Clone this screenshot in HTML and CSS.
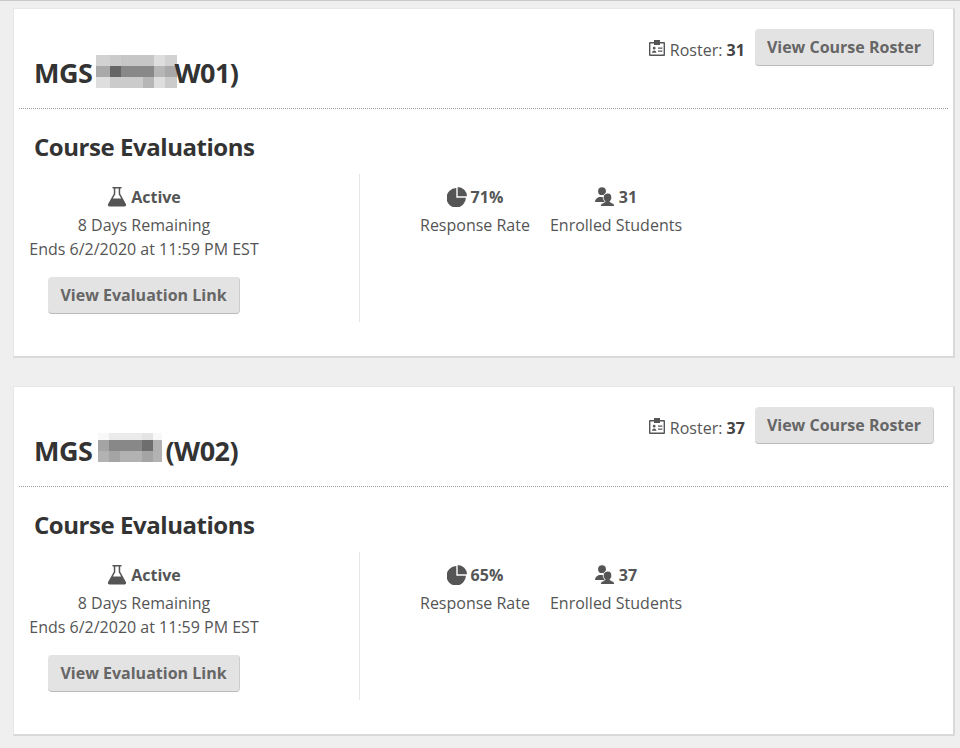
FILE: index.html
```html
<!DOCTYPE html>
<html lang="en">

<head>
    <meta charset="UTF-8">
    <meta name="viewport" content="width=device-width, initial-scale=1.0">
    <title>Course Evaluations</title>
    <link rel="stylesheet" href="styles.css">
</head>

<body>
    <section class="card">
        <header class="card-head">
            <h1 class="course-title">MGS<span class="mosaic mosaic-a">
                <i class="c1"></i><i class="c2"></i><i class="c3"></i><i class="c3"></i><i class="c3"></i><i class="c4"></i><i class="c1"></i>
                <i class="c5"></i><i class="c6"></i><i class="c7"></i><i class="c7"></i><i class="c7"></i><i class="c8"></i><i class="c5"></i>
                <i class="c4"></i><i class="c2"></i><i class="c2"></i><i class="c2"></i><i class="c8"></i><i class="c4"></i><i class="c2"></i>
            </span>W01)</h1>
            <div class="roster">
                <svg class="icon-badge" viewBox="0 0 16 16"><path d="M5 0h6v2h4a1 1 0 0 1 1 1v12a1 1 0 0 1-1 1H1a1 1 0 0 1-1-1V3a1 1 0 0 1 1-1h4zM1.400 3.400v11.200h13.200V3.400H11V5H5V3.400zM5.200 6.800a1.400 1.400 0 1 1 0 2.800 1.400 1.400 0 0 1 0-2.800zM3 12.800c0-1.400.8-2.400 2.200-2.400s2.200 1 2.200 2.400zM9 7.400h4.400v1.300H9zM9 10.400h4.400v1.300H9z" fill-rule="evenodd"/></svg>
                <span class="roster-label">Roster: <b>31</b></span>
                <button class="btn" type="button">View Course Roster</button>
            </div>
        </header>
        <h2 class="section-title">Course Evaluations</h2>
        <div class="eval-row">
            <div class="eval-status">
                <div class="stat-head">
                    <svg class="icon-flask" viewBox="0 0 20 20"><path d="M5.500 0h9v1.500h-1.300v5.300l5.700 10.100c.6 1.100-.1 2.600-1.500 2.600H2.600c-1.400 0-2.100-1.500-1.500-2.600l5.700-10.100V1.500H5.500zM8.300 1.500v5.700l-2.500 4.400h8.400l-2.500-4.400V1.500z" fill-rule="evenodd"/></svg>
                    Active
                </div>
                <div>8 Days Remaining</div>
                <div>Ends 6/2/2020 at 11:59 PM EST</div>
                <button class="btn btn-eval" type="button">View Evaluation Link</button>
            </div>
            <div class="eval-stats">
                <div class="stat">
                    <div class="stat-head">
                        <svg class="icon-pie" viewBox="0 0 20 20"><path d="M9.300 1.100v9.600h9.600A9.700 9.700 0 1 1 9.300 1.100zM10.700 0a9.300 9.300 0 0 1 9.300 9.300h-9.300z"/></svg>
                        71%
                    </div>
                    <div>Response Rate</div>
                </div>
                <div class="stat">
                    <div class="stat-head">
                        <svg class="icon-users" viewBox="0 0 20 20"><circle cx="7" cy="4.200" r="3.900"/><path d="M0 15c0-3 2.200-4.200 4-5l6 0c1 .8 1 2 0 5z"/><path class="front" d="M12.800 6c2.500 0 4 1.900 4 4.300 0 1.600-.7 3-1.700 3.900 0 .9.700 1.200 1.800 1.600 1.700.6 2.800 1.400 2.800 3.700H5.300c0-2.300 1.100-3.100 2.800-3.700 1.100-.4 1.800-.7 1.800-1.600-1-.9-1.700-2.300-1.700-3.900C8.200 7.900 10.300 6 12.800 6z"/></svg>
                        31
                    </div>
                    <div>Enrolled Students</div>
                </div>
            </div>
        </div>
    </section>

    <section class="card">
        <header class="card-head">
            <h1 class="course-title">MGS<span class="mosaic mosaic-b">
                <i class="c9"></i><i class="c10"></i><i class="c10"></i><i class="c10"></i><i class="c11"></i><i class="c9"></i>
                <i class="c12"></i><i class="c7"></i><i class="c7"></i><i class="c7"></i><i class="c13"></i><i class="c14"></i>
                <i class="c14"></i><i class="c12"></i><i class="c14"></i><i class="c14"></i><i class="c12"></i><i class="c14"></i>
            </span>(W02)</h1>
            <div class="roster">
                <svg class="icon-badge" viewBox="0 0 16 16"><path d="M5 0h6v2h4a1 1 0 0 1 1 1v12a1 1 0 0 1-1 1H1a1 1 0 0 1-1-1V3a1 1 0 0 1 1-1h4zM1.400 3.400v11.200h13.200V3.400H11V5H5V3.400zM5.200 6.800a1.400 1.400 0 1 1 0 2.800 1.400 1.400 0 0 1 0-2.800zM3 12.800c0-1.400.8-2.400 2.200-2.400s2.200 1 2.200 2.400zM9 7.400h4.400v1.300H9zM9 10.400h4.400v1.300H9z" fill-rule="evenodd"/></svg>
                <span class="roster-label">Roster: <b>37</b></span>
                <button class="btn" type="button">View Course Roster</button>
            </div>
        </header>
        <h2 class="section-title">Course Evaluations</h2>
        <div class="eval-row">
            <div class="eval-status">
                <div class="stat-head">
                    <svg class="icon-flask" viewBox="0 0 20 20"><path d="M5.500 0h9v1.500h-1.300v5.300l5.700 10.100c.6 1.100-.1 2.600-1.500 2.600H2.600c-1.400 0-2.100-1.500-1.500-2.600l5.700-10.100V1.500H5.500zM8.300 1.500v5.700l-2.500 4.400h8.400l-2.500-4.400V1.500z" fill-rule="evenodd"/></svg>
                    Active
                </div>
                <div>8 Days Remaining</div>
                <div>Ends 6/2/2020 at 11:59 PM EST</div>
                <button class="btn btn-eval" type="button">View Evaluation Link</button>
            </div>
            <div class="eval-stats">
                <div class="stat">
                    <div class="stat-head">
                        <svg class="icon-pie" viewBox="0 0 20 20"><path d="M9.300 1.100v9.600h9.600A9.700 9.700 0 1 1 9.300 1.100zM10.700 0a9.300 9.300 0 0 1 9.300 9.300h-9.300z"/></svg>
                        65%
                    </div>
                    <div>Response Rate</div>
                </div>
                <div class="stat">
                    <div class="stat-head">
                        <svg class="icon-users" viewBox="0 0 20 20"><circle cx="7" cy="4.200" r="3.900"/><path d="M0 15c0-3 2.200-4.200 4-5l6 0c1 .8 1 2 0 5z"/><path class="front" d="M12.800 6c2.500 0 4 1.900 4 4.300 0 1.600-.7 3-1.700 3.900 0 .9.700 1.200 1.800 1.600 1.700.6 2.800 1.400 2.800 3.700H5.300c0-2.300 1.100-3.100 2.800-3.700 1.100-.4 1.800-.7 1.800-1.600-1-.9-1.700-2.300-1.700-3.900C8.200 7.900 10.300 6 12.800 6z"/></svg>
                        37
                    </div>
                    <div>Enrolled Students</div>
                </div>
            </div>
        </div>
    </section>
</body>

</html>
```

FILE: styles.css
```css
body {
    margin: 0;
    padding: 8px 5px 0 13px;
    background: #efefef;
    border-top: 1px solid #c9c9c9;
    font-family: "Open Sans", sans-serif;
    font-size: 16px;
    line-height: 24px;
    color: #555;
}

.card {
    box-sizing: border-box;
    height: 350px;
    margin-top: -1px;
    margin-bottom: 29px;
    padding: 0 5px;
    background: #fff;
    border: 1px solid #e6e6e6;
    border-right: 2px solid #d9d9d9;
    border-bottom: 2px solid #d9d9d9;
}

.card-head {
    display: flex;
    justify-content: space-between;
    align-items: flex-start;
    height: 99px;
    padding: 0 14px 0 15px;
    border-bottom: 1px dotted #999;
}

.course-title {
    display: flex;
    align-items: flex-start;
    margin: 46px 0 0;
    height: 35px;
    font-size: 27px;
    line-height: 35px;
    letter-spacing: -0.5px;
    color: #333;
}

.mosaic {
    display: grid;
    grid-template-rows: 11px 11px 11px;
}

.mosaic-a {
    grid-template-columns: 14px 11px 11px 11px 11px 11px 12px;
    margin: 0 -3px 0 4px;
}

.mosaic-b {
    grid-template-rows: 7px 11px 11px;
    grid-template-columns: 11px 11px 11px 11px 11px 9px;
    margin: 0 3px 0 6px;
}

.c1 { background: #d2d2d2; }
.c2 { background: #cbcbcb; }
.c3 { background: #c6c6c6; }
.c4 { background: #dedede; }
.c5 { background: #a9a9a9; }
.c6 { background: #666; }
.c7 { background: #888; }
.c8 { background: #b6b6b6; }
.c9 { background: #f8f8f8; }
.c10 { background: #ebebeb; }
.c11 { background: #e4e4e4; }
.c12 { background: #a4a4a4; }
.c13 { background: #6e6e6e; }
.c14 { background: #b2b2b2; }

.roster {
    display: flex;
    align-items: center;
    margin-top: 20px;
}

.roster-label {
    margin: 5px 10px 0 5px;
}

.roster-label b {
    color: #444;
}

.icon-badge {
    width: 16px;
    height: 16px;
    margin-top: 1px;
    fill: #555;
}

.btn {
    padding: 0 12px;
    height: 37px;
    background: #e3e3e3;
    border: 0;
    border-bottom: 1px solid #bbb;
    border-right: 1px solid #ccc;
    border-radius: 4px;
    font-family: inherit;
    font-size: 16px;
    font-weight: 700;
    color: #666;
}

.section-title {
    margin: 19px 0 0 15px;
    height: 37px;
    font-size: 24px;
    line-height: 37px;
    letter-spacing: -0.45px;
    color: #333;
}

.eval-row {
    display: flex;
    margin-top: 9px;
}

.eval-status {
    box-sizing: border-box;
    width: 341px;
    height: 148px;
    padding: 11px 90px 0 0;
    border-right: 1px solid #e6e6e6;
    text-align: center;
}

.stat-head {
    display: flex;
    justify-content: center;
    align-items: center;
    gap: 4px;
    height: 24px;
    margin-bottom: 4px;
    font-weight: 700;
    color: #555;
}

.btn-eval {
    margin-top: 16px;
}

.eval-stats {
    display: flex;
    gap: 20px;
    padding: 11px 0 0 60px;
}

.stat {
    text-align: center;
}

.icon-flask,
.icon-pie,
.icon-users {
    width: 20px;
    height: 20px;
    fill: #555;
}

.front {
    stroke: #fff;
    stroke-width: 1;
}
```
